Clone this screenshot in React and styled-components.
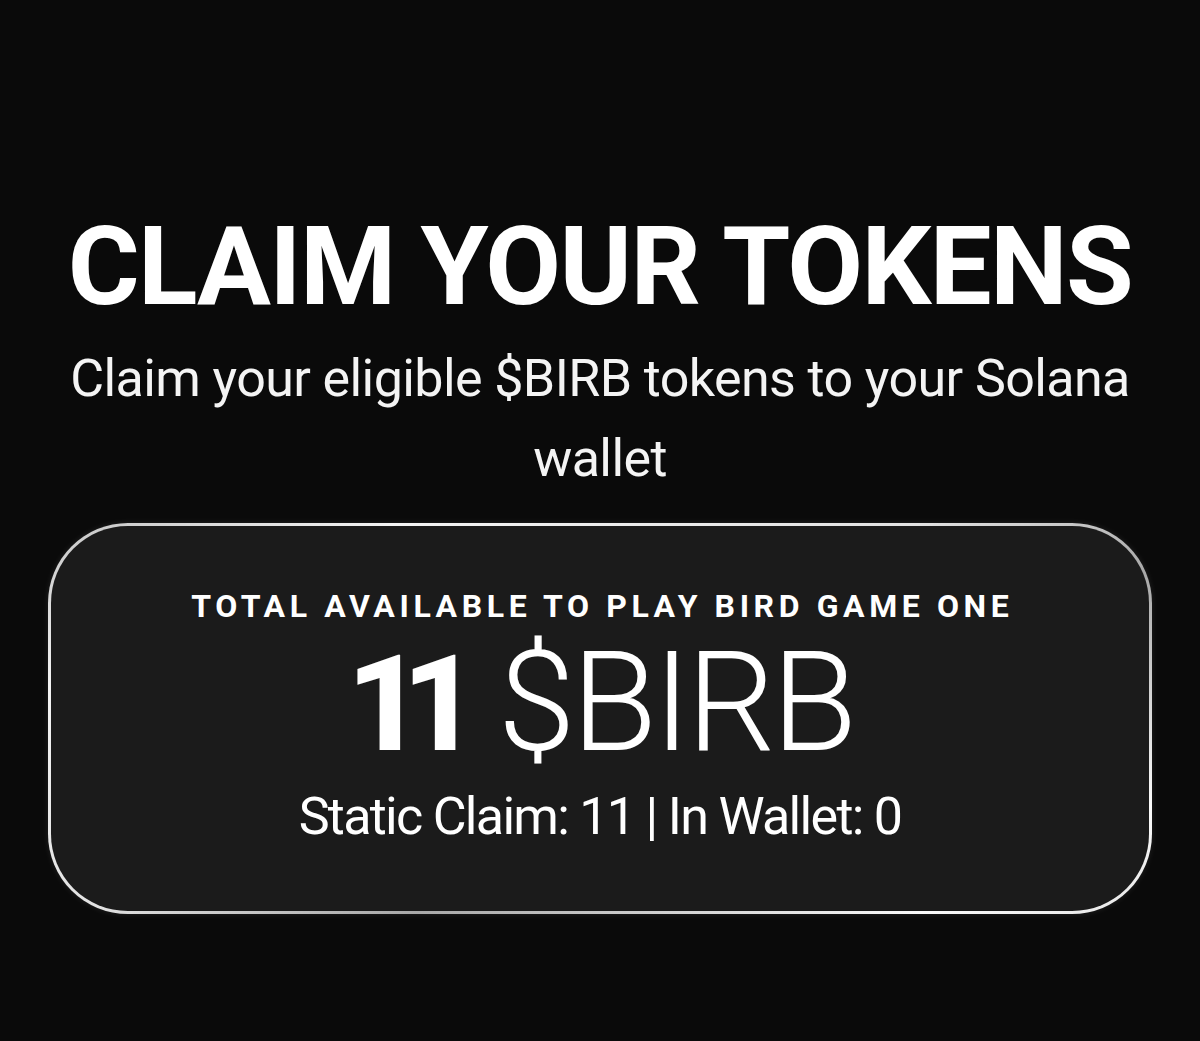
import styled, { createGlobalStyle } from "styled-components";

const GlobalStyle = createGlobalStyle`
  html, body {
    margin: 0;
    padding: 0;
    background: #0a0a0a;
  }
  body {
    font-family: Roboto, "Liberation Sans", sans-serif;
    color: #fff;
  }
`;

const Page = styled.main`
  min-height: 100vh;
  box-sizing: border-box;
  display: flex;
  flex-direction: column;
  align-items: center;
  padding: 212px 48px 0;
  text-align: center;
`;

const Title = styled.h1`
  margin: 0;
  font-size: 110px;
  line-height: 1;
  font-weight: 700;
  letter-spacing: -1.6px;
  text-transform: uppercase;
`;

const Subtitle = styled.p`
  margin: 17px 0 0;
  width: 1080px;
  font-size: 52px;
  line-height: 80px;
  font-weight: 400;
  letter-spacing: -0.6px;
  color: #f4f4f4;
`;

const Card = styled.section`
  margin-top: 24px;
  width: 100%;
  box-sizing: border-box;
  border: 3px solid transparent;
  border-radius: 80px;
  background:
    linear-gradient(#1b1b1b, #1b1b1b) padding-box,
    linear-gradient(155deg, #c4c4c4 0%, #f4f4f4 18%, #e2e2e2 45%, #a8a8a8 62%, #fafafa 88%, #e6e6e6 100%) border-box;
  box-shadow: 0 0 6px rgba(255, 255, 255, 0.1);
  padding: 60px 0 63px;
  display: flex;
  flex-direction: column;
  align-items: center;
`;

const Label = styled.div`
  font-size: 32px;
  line-height: 40px;
  font-weight: 700;
  letter-spacing: 4.6px;
  margin-right: -4.6px;
  text-transform: uppercase;
`;

const Amount = styled.div`
  margin-top: 6px;
  font-size: 140px;
  line-height: 1;
  white-space: nowrap;
`;

const Count = styled.span`
  font-size: 134px;
  font-weight: 800;
  letter-spacing: -22px;
  margin-right: 6px;
`;

const Ticker = styled.span`
  font-weight: 300;
  letter-spacing: -4px;
`;

const Details = styled.div`
  margin-top: 14px;
  font-size: 52px;
  line-height: 62px;
  font-weight: 400;
  letter-spacing: -1.7px;
`;

export default function App() {
  return (
    <>
      <GlobalStyle />
      <Page>
        <Title>Claim your tokens</Title>
        <Subtitle>
          Claim your eligible $BIRB tokens to your Solana wallet
        </Subtitle>
        <Card>
          <Label>Total available to play Bird Game One</Label>
          <Amount>
            <Count>11</Count> <Ticker>$BIRB</Ticker>
          </Amount>
          <Details>Static Claim: 11 | In Wallet: 0</Details>
        </Card>
      </Page>
    </>
  );
}
